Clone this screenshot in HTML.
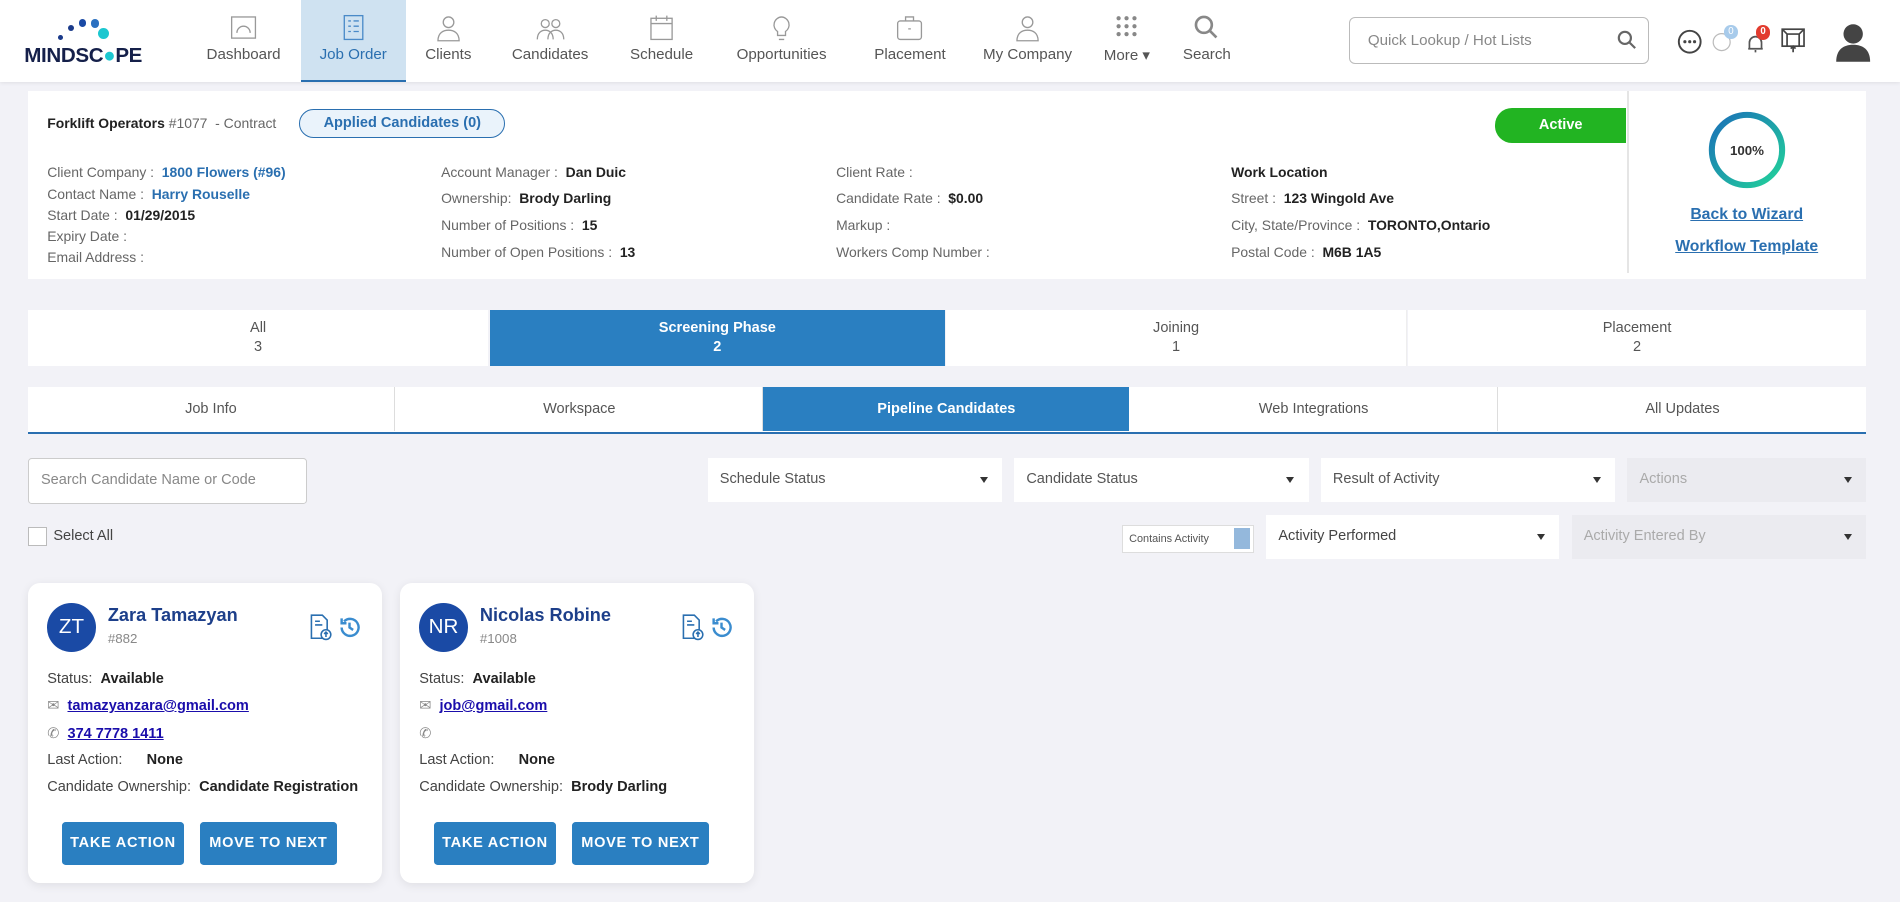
<!DOCTYPE html>
<html><head><meta charset="utf-8"><style>
*{box-sizing:border-box;margin:0;padding:0}
html,body{width:1900px;height:902px;overflow:hidden}
body{background:#f2f2f7;font-family:"Liberation Sans",sans-serif;color:#333}
#w{zoom:1.21173;width:1568px;height:744px;position:relative}
.a{position:absolute}
.hdr{left:0;top:0;width:1568px;height:68px;background:#fff;box-shadow:0 1px 3px rgba(0,0,0,.08)}
.nav{top:0;height:68px;text-align:center;font-size:12.5px;color:#555}
.nav .ic{position:absolute;top:11px;left:50%;margin-left:-12px;width:24px;height:24px}
.nav span{position:absolute;top:38px;left:0;right:0}
.box{background:#fff}
.lbl{font-size:11.5px;color:#666}
.lbl b{color:#222}
.lnk{color:#2a6fb0;font-weight:bold}
.tab{font-size:12px;color:#555;text-align:center;background:#fff}
.sel{background:#fff;font-size:12px;color:#555;height:36px;padding:11px 10px}
.sel:after{content:"";position:absolute;right:12px;top:16px;border:4px solid transparent;border-top:5px solid #333}
.card{background:#fff;border-radius:10px;width:292px;height:248px;box-shadow:0 2px 8px rgba(0,0,0,.08);font-size:12px;color:#444}
.av{left:16px;top:17px;width:40px;height:40px;border-radius:50%;background:#1a4aa5;color:#fff;font-size:17px;text-align:center;line-height:40px}
.nm{left:66px;top:18px;font-size:15px;font-weight:bold;color:#1d3f8a}
.cd{left:66px;top:40px;font-size:11px;color:#888}
.btn{background:#2a7fc1;color:#fff;font-size:12px;font-weight:bold;letter-spacing:.6px;text-align:center;line-height:36px;height:36px;border-radius:3px}
.card .r{left:16px;font-size:12px}
.card .r b{color:#222}
.card a{color:#1a0dab;font-weight:bold;text-decoration:underline}
</style></head><body><div id="w">
<div class="a hdr"></div>
<div class="a" style="left:20px;top:12px;width:110px;height:42px">
<div class="a" style="left:28px;top:17px;width:4px;height:4px;border-radius:50%;background:#1a3a8a"></div>
<div class="a" style="left:36px;top:9px;width:5px;height:5px;border-radius:50%;background:#1a3a8a"></div>
<div class="a" style="left:45px;top:4px;width:6px;height:6px;border-radius:50%;background:#1a4aa5"></div>
<div class="a" style="left:55px;top:4px;width:7px;height:7px;border-radius:50%;background:#2a70c0"></div>
<div class="a" style="left:61px;top:11px;width:9px;height:9px;border-radius:50%;background:#1cc7d0"></div>
<div class="a" style="left:0;top:24px;font-size:17px;font-weight:bold;color:#15204a;letter-spacing:-.3px">MINDSC<span style="color:#1cc7d0">●</span>PE</div>
</div>
<div class="a" style="left:248px;top:0;width:87px;height:68px;background:#cfe2f1;border-bottom:2px solid #2a6fb0"></div>
<div class="a nav" style="left:166px;width:70px"><svg class="ic" viewBox="0 0 22 22" fill="none" stroke="#999"><rect x="2" y="3" width="18" height="16"/><path d="M6 15a5 5 0 0 1 10 0"/></svg><span>Dashboard</span></div>
<div class="a nav" style="left:248px;width:87px;color:#2a6fb0"><svg class="ic" viewBox="0 0 22 22" fill="none" stroke="#4a8ac8"><rect x="4" y="2" width="14" height="18"/><path d="M7 6h2M11 6h4M7 10h2M11 10h4M7 14h2M11 14h4"/></svg><span>Job Order</span></div>
<div class="a nav" style="left:340px;width:60px"><svg class="ic" viewBox="0 0 22 22" fill="none" stroke="#999"><circle cx="11" cy="7" r="4"/><path d="M3 21c0-6 4-8 8-8s8 2 8 8z"/></svg><span>Clients</span></div>
<div class="a nav" style="left:414px;width:80px"><svg class="ic" viewBox="0 0 22 22" fill="none" stroke="#999"><circle cx="7" cy="8" r="3"/><circle cx="15" cy="8" r="3"/><path d="M1 20c0-5 3-7 6-7s6 2 6 7M9 20c0-5 3-7 6-7s6 2 6 7"/></svg><span>Candidates</span></div>
<div class="a nav" style="left:511px;width:70px"><svg class="ic" viewBox="0 0 22 22" fill="none" stroke="#999"><rect x="3" y="4" width="16" height="16"/><path d="M3 8h16M7 2v4M15 2v4"/></svg><span>Schedule</span></div>
<div class="a nav" style="left:600px;width:90px"><svg class="ic" viewBox="0 0 22 22" fill="none" stroke="#999"><path d="M11 3a6 6 0 0 0-3 11v3h6v-3a6 6 0 0 0-3-11zM9 20h4"/></svg><span>Opportunities</span></div>
<div class="a nav" style="left:711px;width:80px"><svg class="ic" viewBox="0 0 22 22" fill="none" stroke="#999"><rect x="2" y="6" width="18" height="14" rx="2"/><path d="M8 6V3h6v3M10 12h2"/></svg><span>Placement</span></div>
<div class="a nav" style="left:803px;width:90px"><svg class="ic" viewBox="0 0 22 22" fill="none" stroke="#999"><circle cx="11" cy="7" r="4"/><path d="M3 21c0-6 4-8 8-8s8 2 8 8z"/></svg><span>My Company</span></div>
<div class="a nav" style="left:905px;width:50px"><svg class="ic" viewBox="0 0 22 22" fill="#888"><circle cx="5" cy="4" r="1.6"/><circle cx="11" cy="4" r="1.6"/><circle cx="17" cy="4" r="1.6"/><circle cx="5" cy="10" r="1.6"/><circle cx="11" cy="10" r="1.6"/><circle cx="17" cy="10" r="1.6"/><circle cx="5" cy="16" r="1.6"/><circle cx="11" cy="16" r="1.6"/><circle cx="17" cy="16" r="1.6"/></svg><span>More ▾</span></div>
<div class="a nav" style="left:971px;width:50px"><svg class="ic" viewBox="0 0 22 22" fill="none" stroke="#888" stroke-width="2"><circle cx="9" cy="9" r="6"/><path d="M13.5 13.5l5 5"/></svg><span>Search</span></div>
<div class="a" style="left:1113px;top:14px;width:248px;height:39px;border:1px solid #bbb;border-radius:5px;font-size:12.5px;color:#888;padding:12px 15px">Quick Lookup / Hot Lists
<svg class="a" style="right:10px;top:10px" width="16" height="16" viewBox="0 0 16 16" fill="none" stroke="#666" stroke-width="1.8"><circle cx="6.5" cy="6.5" r="5"/><path d="M10 10l5 5"/></svg></div>
<svg class="a" style="left:1384px;top:24px" width="21" height="21" viewBox="0 0 21 21"><circle cx="10.5" cy="10.5" r="9" fill="none" stroke="#444" stroke-width="1.6"/><circle cx="6.5" cy="10.5" r="1.3" fill="#444"/><circle cx="10.5" cy="10.5" r="1.3" fill="#444"/><circle cx="14.5" cy="10.5" r="1.3" fill="#444"/></svg>
<svg class="a" style="left:1413px;top:25px" width="16" height="18" viewBox="0 0 16 18" fill="none" stroke="#bbb"><circle cx="8" cy="10" r="7"/></svg>
<div class="a" style="left:1423px;top:21px;width:11px;height:11px;border-radius:50%;background:#a8cbeb;color:#fff;font-size:8px;text-align:center;line-height:11px">0</div>
<svg class="a" style="left:1442px;top:27px" width="14" height="17" viewBox="0 0 14 17" fill="none" stroke="#555" stroke-width="1.4"><path d="M2 13V8a5 5 0 0 1 10 0v5zM1 13h12M7 14v2"/></svg>
<div class="a" style="left:1449px;top:21px;width:12px;height:12px;border-radius:50%;background:#e23b2e;color:#fff;font-size:8px;text-align:center;line-height:12px;font-weight:bold">0</div>
<svg class="a" style="left:1470px;top:23px" width="20" height="21" viewBox="0 0 20 21" fill="none" stroke="#444" stroke-width="1.4"><rect x="1" y="1" width="18" height="14"/><path d="M1 1l4 4v10M19 1l-4 4v10M5 5h10M10 15v5M8 17l2-2 2 2"/></svg>
<svg class="a" style="left:1514px;top:19px" width="30" height="32" viewBox="0 0 30 32" fill="#444"><circle cx="15" cy="9" r="8"/><path d="M1 32c0-10 6-14 14-14s14 4 14 14z"/></svg>

<div class="a box" style="left:23px;top:75px;width:1517px;height:155px"></div>
<div class="a" style="left:1343px;top:75px;width:1px;height:150px;background:#e5e5e5"></div>
<div class="a" style="left:39px;top:95px;font-size:11.5px;color:#666"><b style="color:#222">Forklift Operators</b> #1077 &nbsp;- Contract</div>
<div class="a" style="left:247px;top:90px;width:170px;height:24px;border:1px solid #2a6fb0;border-radius:12px;background:#eaf3fb;font-size:12px;color:#2a6fb0;font-weight:bold;text-align:center;line-height:22px">Applied Candidates (0)</div>
<div class="a" style="left:1234px;top:89px;width:108px;height:29px;background:#22b422;border-radius:14px 0 0 14px;color:#fff;font-size:12px;font-weight:bold;text-align:center;line-height:29px">Active</div>
<div class="a lbl" style="left:39px;top:134px;line-height:17.5px">Client Company : &nbsp;<span class="lnk">1800 Flowers (#96)</span><br>Contact Name : &nbsp;<span class="lnk">Harry Rouselle</span><br>Start Date : &nbsp;<b>01/29/2015</b><br>Expiry Date :<br>Email Address :</div>
<div class="a lbl" style="left:364px;top:131px;line-height:22px">Account Manager : &nbsp;<b>Dan Duic</b><br>Ownership: &nbsp;<b>Brody Darling</b><br>Number of Positions : &nbsp;<b>15</b><br>Number of Open Positions : &nbsp;<b>13</b></div>
<div class="a lbl" style="left:690px;top:131px;line-height:22px">Client Rate :<br>Candidate Rate : &nbsp;<b>$0.00</b><br>Markup :<br>Workers Comp Number :</div>
<div class="a lbl" style="left:1016px;top:131px;line-height:22px"><b>Work Location</b><br>Street : &nbsp;<b>123 Wingold Ave</b><br>City, State/Province : &nbsp;<b>TORONTO,Ontario</b><br>Postal Code : &nbsp;<b>M6B 1A5</b></div>
<svg class="a" style="left:1409px;top:91px" width="66" height="66" viewBox="0 0 66 66"><defs><linearGradient id="g" x1="0" y1="0" x2="1" y2="1"><stop offset="0" stop-color="#1a6fb8"/><stop offset="1" stop-color="#22d39a"/></linearGradient></defs><circle cx="33" cy="33" r="29" fill="none" stroke="url(#g)" stroke-width="5"/><text x="33" y="37" font-size="11" font-weight="bold" text-anchor="middle" fill="#333" font-family="Liberation Sans">100%</text></svg>
<div class="a" style="left:1343px;top:164px;width:197px;text-align:center;font-size:13px;font-weight:bold;color:#2a6fb0;text-decoration:underline;line-height:27px">Back to Wizard<br>Workflow Template</div>

<div class="a tab" style="left:23px;top:256px;width:380px;height:46px;padding-top:7px;line-height:16px">All<br>3</div>
<div class="a tab" style="left:404px;top:256px;width:376px;height:46px;padding-top:7px;line-height:16px;background:#2a7fc1;color:#fff;font-weight:bold">Screening Phase<br>2</div>
<div class="a tab" style="left:781px;top:256px;width:380px;height:46px;padding-top:7px;line-height:16px;border-right:1px solid #eee">Joining<br>1</div>
<div class="a tab" style="left:1162px;top:256px;width:378px;height:46px;padding-top:7px;line-height:16px">Placement<br>2</div>

<div class="a" style="left:23px;top:319px;width:1517px;height:39px;background:#fff;border-bottom:2px solid #2a6fb0"></div>
<div class="a tab" style="left:23px;top:319px;width:303px;height:37px;line-height:37px;border-right:1px solid #ddd">Job Info</div>
<div class="a tab" style="left:327px;top:319px;width:303px;height:37px;line-height:37px;border-right:1px solid #ddd">Workspace</div>
<div class="a tab" style="left:630px;top:319px;width:302px;height:37px;line-height:37px;background:#2a7fc1;color:#fff;font-weight:bold">Pipeline Candidates</div>
<div class="a tab" style="left:933px;top:319px;width:303px;height:37px;line-height:37px;border-right:1px solid #ddd">Web Integrations</div>
<div class="a tab" style="left:1237px;top:319px;width:303px;height:37px;line-height:37px">All Updates</div>

<div class="a" style="left:23px;top:378px;width:230px;height:38px;background:#fff;border:1px solid #ccc;border-radius:3px;font-size:12px;color:#888;padding:11px 10px">Search Candidate Name or Code</div>
<div class="a sel" style="left:584px;top:378px;width:243px">Schedule Status</div>
<div class="a sel" style="left:837px;top:378px;width:243px">Candidate Status</div>
<div class="a sel" style="left:1090px;top:378px;width:243px">Result of Activity</div>
<div class="a sel" style="left:1343px;top:378px;width:197px;background:#ebebf0;color:#aaa">Actions</div>
<div class="a" style="left:23px;top:435px;width:16px;height:16px;border:1px solid #bbb;background:#fff"></div>
<div class="a" style="left:44px;top:436px;font-size:12px;color:#444">Select All</div>
<div class="a" style="left:926px;top:433px;width:109px;height:23px;background:#fff;border:1px solid #ddd;font-size:9px;color:#555;padding:6px 5px">Contains Activity</div>
<div class="a" style="left:1018px;top:436px;width:14px;height:17px;background:#94b8dc"></div>
<div class="a sel" style="left:1045px;top:425px;width:242px;color:#444">Activity Performed</div>
<div class="a sel" style="left:1297px;top:425px;width:243px;background:#ebebf0;color:#aaa">Activity Entered By</div>

<div class="a card" style="left:23px;top:481px">
<div class="a av">ZT</div><div class="a nm">Zara Tamazyan</div><div class="a cd">#882</div>
<svg class="a" style="left:232px;top:26px" width="20" height="22" viewBox="0 0 20 22" fill="none" stroke="#2a6fb0" stroke-width="1.3"><path d="M2 1h9l4 4v15H2z"/><path d="M5 6h4M5 9h6"/><circle cx="14" cy="17" r="4" fill="#fff"/><path d="M14 19v-4M12.5 16.5l1.5-1.5 1.5 1.5"/></svg>
<svg class="a" style="left:256px;top:27px" width="19" height="19" viewBox="0 0 19 19" fill="none" stroke="#3a8ccf" stroke-width="2"><path d="M3 9.5a7 7 0 1 0 2-5M3 2v4h4M9.5 5.5v4l3 2"/></svg>
<div class="a r" style="top:73px">Status: &nbsp;<b>Available</b></div>
<div class="a r" style="top:95px"><span style="color:#888">✉</span> &nbsp;<a>tamazyanzara@gmail.com</a></div>
<div class="a r" style="top:118px"><span style="color:#888">✆</span> &nbsp;<a>374 7778 1411</a></div>
<div class="a r" style="top:140px">Last Action: &nbsp;&nbsp;&nbsp;&nbsp;&nbsp;<b>None</b></div>
<div class="a r" style="top:162px">Candidate Ownership: &nbsp;<b>Candidate Registration</b></div>
<div class="a btn" style="left:28px;top:197px;width:101px">TAKE ACTION</div>
<div class="a btn" style="left:142px;top:197px;width:113px">MOVE TO NEXT</div>
</div>
<div class="a card" style="left:330px;top:481px">
<div class="a av">NR</div><div class="a nm">Nicolas Robine</div><div class="a cd">#1008</div>
<svg class="a" style="left:232px;top:26px" width="20" height="22" viewBox="0 0 20 22" fill="none" stroke="#2a6fb0" stroke-width="1.3"><path d="M2 1h9l4 4v15H2z"/><path d="M5 6h4M5 9h6"/><circle cx="14" cy="17" r="4" fill="#fff"/><path d="M14 19v-4M12.5 16.5l1.5-1.5 1.5 1.5"/></svg>
<svg class="a" style="left:256px;top:27px" width="19" height="19" viewBox="0 0 19 19" fill="none" stroke="#3a8ccf" stroke-width="2"><path d="M3 9.5a7 7 0 1 0 2-5M3 2v4h4M9.5 5.5v4l3 2"/></svg>
<div class="a r" style="top:73px">Status: &nbsp;<b>Available</b></div>
<div class="a r" style="top:95px"><span style="color:#888">✉</span> &nbsp;<a>job@gmail.com</a></div>
<div class="a r" style="top:118px"><span style="color:#888">✆</span></div>
<div class="a r" style="top:140px">Last Action: &nbsp;&nbsp;&nbsp;&nbsp;&nbsp;<b>None</b></div>
<div class="a r" style="top:162px">Candidate Ownership: &nbsp;<b>Brody Darling</b></div>
<div class="a btn" style="left:28px;top:197px;width:101px">TAKE ACTION</div>
<div class="a btn" style="left:142px;top:197px;width:113px">MOVE TO NEXT</div>
</div>
</div></body></html>
